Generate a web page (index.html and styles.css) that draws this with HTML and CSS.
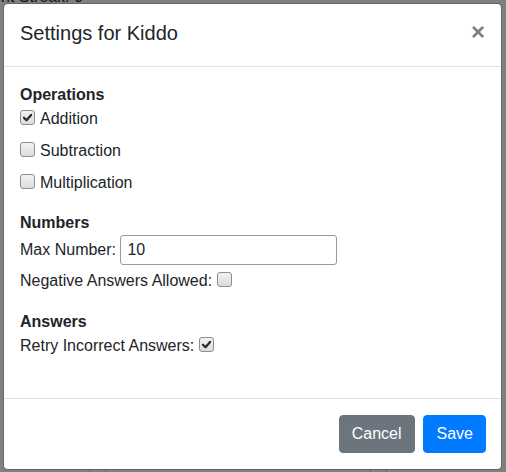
FILE: index.html
```html
<!DOCTYPE html>
<html lang="en">
<head>
<meta charset="utf-8">
<title>Settings for Kiddo</title>
<link rel="stylesheet" href="styles.css">
</head>
<body>
<div class="page-behind">
  <span class="streak">Current Streak: 0</span>
  <span class="tline l1"></span>
  <span class="tline l2"></span>
  <span class="tline l3"></span>
  <span class="tline l4"></span>
</div>
<div class="modal">
  <div class="modal-header">
    <h5 class="modal-title">Settings for Kiddo</h5>
    <button class="close" type="button">×</button>
  </div>
  <div class="modal-body">
    <div class="section">
      <div class="sec-title">Operations</div>
      <label class="check"><span class="cb"><svg viewBox="0 0 14 14" width="14" height="14"><path d="M3.2 7.2 L5.9 9.9 L10.9 4.2" fill="none" stroke="#2b2b2b" stroke-width="2.4" stroke-linecap="round" stroke-linejoin="round"/></svg></span>Addition</label>
      <label class="check"><span class="cb"></span>Subtraction</label>
      <label class="check"><span class="cb"></span>Multiplication</label>
    </div>
    <div class="section">
      <div class="sec-title">Numbers</div>
      <div class="field">Max Number: <input class="num-input" type="text" value="10"></div>
      <label class="check inline neg">Negative Answers Allowed: <span class="cb"></span></label>
    </div>
    <div class="section last">
      <div class="sec-title">Answers</div>
      <label class="check inline">Retry Incorrect Answers: <span class="cb"><svg viewBox="0 0 14 14" width="14" height="14"><path d="M3.2 7.2 L5.9 9.9 L10.9 4.2" fill="none" stroke="#2b2b2b" stroke-width="2.4" stroke-linecap="round" stroke-linejoin="round"/></svg></span></label>
    </div>
  </div>
  <div class="modal-footer">
    <button class="btn btn-secondary" type="button">Cancel</button>
    <button class="btn btn-primary" type="button">Save</button>
  </div>
</div>
</body>
</html>
```

FILE: styles.css
```css
* { box-sizing: border-box; }

html, body {
  margin: 0;
  padding: 0;
}

body {
  width: 506px;
  height: 472px;
  overflow: hidden;
  background: #808080;
  font-family: "Liberation Sans", Arial, sans-serif;
  font-size: 16px;
  line-height: 1.5;
  color: #212529;
  position: relative;
}

.page-behind {
  position: absolute;
  left: 0;
  top: 0;
  width: 506px;
  height: 472px;
}

.streak {
  position: absolute;
  left: -39px;
  top: -15px;
  color: #111314;
  white-space: nowrap;
}

.tline {
  position: absolute;
  top: 466px;
  width: 1px;
  height: 8px;
  background: #6a6c6e;
}
.l1 { left: 89px; }
.l2 { left: 105px; }
.l3 { left: 370px; }
.l4 { left: 386px; }

.modal {
  position: relative;
  margin: 3px 0 0 3px;
  width: 499px;
  background: #fff;
  border: 1px solid rgba(0, 0, 0, 0.2);
  border-radius: 4.8px;
  background-clip: padding-box;
}

.modal-header {
  display: flex;
  align-items: flex-start;
  justify-content: space-between;
  padding: 16px;
  border-bottom: 1px solid #dee2e6;
}

.modal-title {
  margin: 0;
  font-size: 20px;
  font-weight: 500;
  line-height: 30px;
  position: relative;
  top: -2px;
}

.close {
  padding: 0;
  margin: 0;
  background: transparent;
  border: 0;
  font-family: "Liberation Sans", Arial, sans-serif;
  font-size: 24px;
  font-weight: 700;
  line-height: 1;
  color: #000;
  opacity: 0.5;
  text-shadow: 0 1px 0 #fff;
}

.modal-body {
  padding: 16px 16px 32px;
}

.section {
  display: flex;
  flex-direction: column;
  align-items: flex-start;
  margin-bottom: 8px;
}
.section.last { margin-bottom: 0; }

.sec-title {
  font-weight: 700;
  line-height: 24px;
}

.check {
  display: flex;
  align-items: center;
  line-height: 24px;
  margin-bottom: 8px;
}

.check.neg { margin-bottom: 9px; }

.check .cb {
  margin-right: 5px;
}

.check.inline .cb {
  margin-left: 5px;
  margin-right: 0;
}

.cb {
  display: inline-block;
  width: 15px;
  height: 15px;
  border: 1px solid #8e8e8e;
  border-radius: 3px;
  background: linear-gradient(#f2f2f2, #dcdcdc);
  position: relative;
  top: -2px;
  flex: none;
}

.cb svg {
  display: block;
  width: 13px;
  height: 13px;
}

.field {
  display: flex;
  align-items: center;
  white-space: pre;
  height: 30px;
  margin-bottom: 4px;
}

.num-input {
  width: 217px;
  height: 30px;
  margin-left: 0;
  padding: 2px 6px;
  border: 1px solid #9a9a9a;
  border-radius: 3px;
  font-family: "Liberation Sans", Arial, sans-serif;
  font-size: 16px;
  color: #212529;
  background: #fff;
}

.modal-footer {
  display: flex;
  justify-content: flex-end;
  align-items: center;
  gap: 8px;
  padding: 16px 15px 16px 16px;
  border-top: 1px solid #dee2e6;
}

.btn {
  font-family: "Liberation Sans", Arial, sans-serif;
  font-size: 16px;
  line-height: 24px;
  padding: 6px 12px;
  border: 1px solid transparent;
  border-radius: 4px;
  color: #fff;
}

.btn-secondary {
  background: #6c757d;
  border-color: #6c757d;
}

.btn-primary {
  background: #007bff;
  border-color: #007bff;
  padding: 6px 12px 6px 13px;
}
```
